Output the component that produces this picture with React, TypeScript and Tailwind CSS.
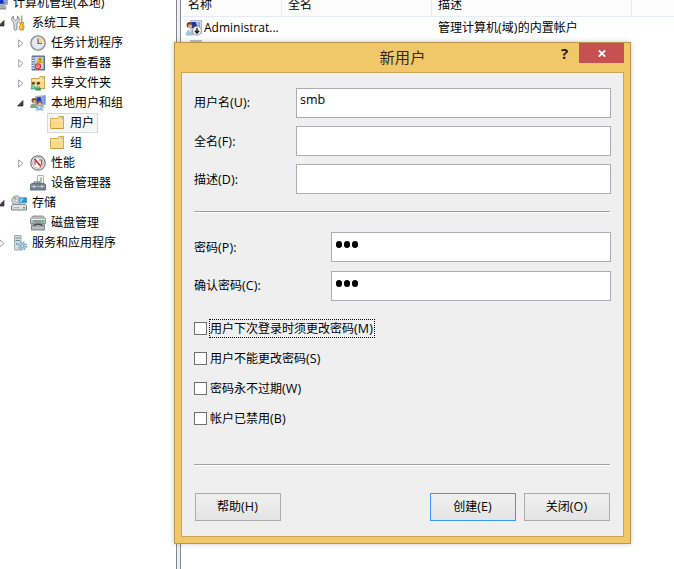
import type { ReactNode } from "react";

const FONT = "font-['Open_Sans','Noto_Sans_CJK_SC',sans-serif]";

// Latin runs are set a little wider than the Chinese text around them.
function Label({ text }: { text: string }) {
  return (
    <span>
      {text.split(/([\x20-\x7e]+)/).map((part, i) =>
        i % 2 === 1 ? (
          <span key={i} className="text-[12.5px] tracking-[0.1px]">
            {part}
          </span>
        ) : (
          part
        ),
      )}
    </span>
  );
}

function Svg({ children }: { children: ReactNode }) {
  return (
    <svg viewBox="0 0 16 16" className="block size-4 shrink-0">
      {children}
    </svg>
  );
}

function MonitorShape() {
  return (
    <>
      <path d="M5.500 1.500l10-1v9l-10 .5z" fill="#c9ced6" stroke="#9aa1aa" strokeWidth=".8" />
      <path d="M6.500 2.500l8-1v7l-8 .5z" fill="#1c33c4" />
      <path d="M10.500 2l4-.5v7l-2.500.2z" fill="#7fa4ee" />
      <path d="M8 10h5l2 2.500H7z" fill="#a6adb5" />
    </>
  );
}

const ComputerIcon = () => (
  <Svg>
    <MonitorShape />
    <path d="M5 12.500h9v2H5z" fill="#8b939d" />
  </Svg>
);

const ToolsIcon = () => (
  <Svg>
    <path d="M2.500 1v3l2 1.500L6.500 4V1l1.700 2v2.500L6 8v6l-1.500 1.500L3 14V8L.8 5.500V3z" fill="#dcdfe2" stroke="#7e848a" strokeWidth=".9" />
    <path d="M9.800.5h1.700v7H9.800z" fill="#a5abb0" />
    <path d="M8.500 7.500H13l-.8 2 1 2.500-.8 3H9l-.8-3 1-2.500z" fill="#f3b413" stroke="#b47b0b" strokeWidth=".6" />
    <path d="M10 10v4" stroke="#ffe38a" />
  </Svg>
);

const ClockIcon = () => (
  <Svg>
    <circle cx="8" cy="8" r="7.300" fill="#c3c6c9" stroke="#83888c" strokeWidth="1.100" />
    <circle cx="8" cy="8" r="5.600" fill="#e0ebf5" stroke="#f4f4f4" strokeWidth=".6" />
    <path d="M8 8V2.400A5.600 5.600 0 0 1 13.600 8z" fill="#f7d79b" />
    <path d="M8 3.500V8.500h4" fill="none" stroke="#596a7c" strokeWidth="1.200" />
  </Svg>
);

const EventIcon = () => (
  <Svg>
    <path d="M2 1h12.500v14H2z" fill="#6e86ba" stroke="#566b9c" />
    <path d="M4.500 2H13.500v12H4.500z" fill="#c4d0e8" />
    <path d="M1 3h3M1 5.500h3M1 8h3M1 10.500h3M1 13h3" stroke="#edf0f5" strokeWidth="1.200" />
    <path d="M10 1.500l3.500 6H6.800z" fill="#ffd51c" stroke="#c59204" strokeWidth=".6" />
    <path d="M10 3.400v2.300M10 6.200v.8" stroke="#333" />
    <circle cx="8" cy="11.300" r="2.500" fill="#f6d0d0" stroke="#d93030" strokeWidth="1.300" />
    <path d="M7 10.300l2 2m0-2l-2 2" stroke="#d93030" strokeWidth=".9" />
  </Svg>
);

function FolderShape() {
  return (
    <>
      <path d="M1.500 3.500h7L10 1.500h4.500v12h-13z" fill="#efc965" stroke="#d3aa50" />
      <path d="M10.500 2.500h3.200v1h-3.800z" fill="#f9fbfd" />
      <path d="M12.300 2.400h1.400v1.100h-1.400z" fill="#5ba0cf" />
      <path d="M2 5h12v8H2z" fill="#f8db88" />
      <path d="M2 5h12" stroke="#fff0bb" />
      <path d="M3 13.500h11.500" stroke="#c9993f" />
    </>
  );
}

const FolderIcon = () => (
  <Svg>
    <FolderShape />
  </Svg>
);

const SharedFolderIcon = () => (
  <Svg>
    <FolderShape />
    <circle cx="3.500" cy="8.500" r="1.700" fill="#5d4728" />
    <circle cx="8.500" cy="8.500" r="1.700" fill="#40352a" />
    <path d="M3.300 8.700h1.500v1.500H3.300zM8.300 8.700h1.500v1.500H8.300z" fill="#e8b78a" />
    <path d="M.8 13.500c0-4 4.500-4 5-.5v1.500h-5z" fill="#52b591" />
    <path d="M5.500 15c0-5 5-5 5.500 0v.5H5.500z" fill="#36966f" />
    <path d="M2.500 12.500l1.500-1M7.500 13l1.500-1" stroke="#c9f1df" />
  </Svg>
);

const UsersIcon = () => (
  <Svg>
    <MonitorShape />
    <circle cx="4" cy="5.500" r="2.500" fill="#78552d" />
    <circle cx="4.600" cy="6.500" r="1.500" fill="#dba97c" />
    <path d="M.3 11.500C.5 7.500 7 7.500 7.300 12v1h-7z" fill="#86a980" />
    <circle cx="9.500" cy="8" r="2.500" fill="#876135" />
    <circle cx="9.800" cy="9" r="1.600" fill="#efc69b" />
    <path d="M5.500 15.500c0-5.500 7.500-5.500 8 0z" fill="#8fbde0" />
    <path d="M8.500 11.500l1 2 1-2z" fill="#fff" />
  </Svg>
);

const PerfIcon = () => (
  <Svg>
    <circle cx="8" cy="8" r="7.200" fill="#f6f6f6" stroke="#777" strokeWidth="1.200" />
    <circle cx="8" cy="8" r="5.300" fill="#fff" stroke="#a5a5a5" strokeWidth=".9" />
    <path d="M5 10V6M9 5h2.500v5" fill="none" stroke="#b44b50" strokeWidth="1.200" />
    <path d="M4.500 4l6.500 7.500" stroke="#eb1a22" strokeWidth="1.700" />
  </Svg>
);

const DeviceIcon = () => (
  <Svg>
    <path d="M7.500.5h6v9h-6z" fill="#f3f5f3" stroke="#b0b4b4" />
    <path d="M10 2.500h2v5h-2z" fill="#9acb8e" />
    <path d="M4 8.500V7h6v1.500" fill="none" stroke="#525d67" />
    <path d="M.5 9.500L2 8.500h12l1.500 1v5.500H.5z" fill="#71818f" stroke="#66737e" />
    <path d="M1 11.500h14" stroke="#aebac4" />
    <path d="M3 10.500h2v2H3zM11 10.500h2v2h-2z" fill="#d4dae0" />
  </Svg>
);

const StorageIcon = () => (
  <Svg>
    <circle cx="5.500" cy="5.500" r="4.700" fill="#cdd2d6" stroke="#92979c" strokeWidth=".9" />
    <path d="M5.500 5.500L2 2.500l2-1.300z" fill="#75bd77" />
    <circle cx="5.500" cy="5.500" r="1.300" fill="#fff" stroke="#92989e" strokeWidth=".7" />
    <path d="M8 2.500h8v5.500H8z" fill="#2691c8" stroke="#73b9d8" strokeWidth=".8" />
    <path d="M9 3.500h4l-3 4H9z" fill="#83d0ee" />
    <path d="M.5 10.500L2 9.300h12l1.500 1.200v4.500H.5z" fill="#dfe2e5" stroke="#7b8187" />
    <path d="M2.500 12.700h6" stroke="#a4aab0" />
    <path d="M12 12h2v1.500h-2z" fill="#23bc3c" />
  </Svg>
);

const DiskIcon = () => (
  <Svg>
    <path d="M3 1h10l2.500 3v4.500H.5V4z" fill="#b4b8bb" stroke="#909497" />
    <path d="M1 4.500h14" stroke="#eceeef" />
    <path d="M3 6h8" stroke="#6f7477" />
    <path d="M11.500 5h2.500v1.700h-2.500z" fill="#2bd940" />
    <path d="M1.500 9.500L4 8h8l2.500 1.500v5.500h-13z" fill="#a2a7aa" stroke="#84898c" />
    <path d="M3.500 11c1.500-2.500 7.500-2.500 9 0" fill="none" stroke="#424649" strokeWidth="1.200" />
    <path d="M2 13h12" stroke="#d2d5d7" />
  </Svg>
);

const ServiceIcon = () => (
  <Svg>
    <path d="M3.500.5h6.500v14.500H3.500z" fill="#d6dfe3" stroke="#9eacb3" />
    <path d="M4.500 3h4.500M4.500 5.500h4.500" stroke="#6c8995" />
    <path d="M5 8h2v1.500H5z" fill="#57b662" />
    <circle cx="11.500" cy="11" r="3.400" fill="#a9c8e2" />
    <circle cx="11.500" cy="11" r="3.900" fill="none" stroke="#6d9ac3" strokeWidth="1.300" strokeDasharray="1.600 1.460" />
    <circle cx="11.500" cy="11" r="1.400" fill="#fff" stroke="#6d9ac3" />
  </Svg>
);

const DisabledUserIcon = () => (
  <Svg>
    <path d="M4.500.5l11-.1v13.100h-11z" fill="#d4d6d9" stroke="#b4b7bb" />
    <path d="M5.500 2h8v6h-8z" fill="#1732ac" />
    <path d="M9.500 2h4v6H12z" fill="#9dbdf2" />
    <circle cx="3.600" cy="5" r="3" fill="#71451f" />
    <circle cx="4" cy="6.300" r="2" fill="#e4b184" />
    <path d="M0 15.500c0-8.500 8-8.500 8 0z" fill="#9cc2e4" />
    <path d="M3 9.500l1 3 1-3z" fill="#fff" />
    <circle cx="11" cy="10.700" r="4.500" fill="#f8f8f8" stroke="#8a8a8a" strokeWidth=".8" />
    <path d="M11 8v5M8.900 10.800l2.100 2.300 2.100-2.300" fill="none" stroke="#222" strokeWidth="1.500" />
  </Svg>
);

function Arrow({ open }: { open: boolean }) {
  return open ? (
    <svg viewBox="0 0 7 7" className="mr-1 block size-[7px] shrink-0">
      <path d="M6 0.500V6H0.500z" fill="#404040" stroke="#262626" strokeWidth=".7" />
    </svg>
  ) : (
    <svg viewBox="0 0 6 9" className="mr-1 block h-[9px] w-[6px] shrink-0">
      <path d="M.7 .8L5 4.500 .7 8.200z" fill="#fff" stroke="#a0a0a0" />
    </svg>
  );
}

type Node = { level: 0 | 1 | 2 | 3; text: string; icon: ReactNode; arrow?: "open" | "closed"; selected?: boolean };

const NODES: Node[] = [
  { level: 0, text: "计算机管理(本地)", icon: <ComputerIcon /> },
  { level: 1, text: "系统工具", icon: <ToolsIcon />, arrow: "open" },
  { level: 2, text: "任务计划程序", icon: <ClockIcon />, arrow: "closed" },
  { level: 2, text: "事件查看器", icon: <EventIcon />, arrow: "closed" },
  { level: 2, text: "共享文件夹", icon: <SharedFolderIcon />, arrow: "closed" },
  { level: 2, text: "本地用户和组", icon: <UsersIcon />, arrow: "open" },
  { level: 3, text: "用户", icon: <FolderIcon />, selected: true },
  { level: 3, text: "组", icon: <FolderIcon /> },
  { level: 2, text: "性能", icon: <PerfIcon />, arrow: "closed" },
  { level: 2, text: "设备管理器", icon: <DeviceIcon /> },
  { level: 1, text: "存储", icon: <StorageIcon />, arrow: "open" },
  { level: 2, text: "磁盘管理", icon: <DiskIcon /> },
  { level: 1, text: "服务和应用程序", icon: <ServiceIcon />, arrow: "closed" },
];

const INDENT = ["-ml-[24px]", "-ml-[5px]", "ml-[14px]", "ml-[33px]"];

function TreeRow({ node }: { node: Node }) {
  return (
    <div className={`flex h-5 items-center ${INDENT[node.level]}`}>
      <div className="flex w-[14px] shrink-0 justify-end">{node.arrow && <Arrow open={node.arrow === "open"} />}</div>
      <div
        className={`flex h-5 items-center gap-[5px] border pr-[3px] pl-px ${
          node.selected ? "border-[#dadada] bg-[#f7f7f7]" : "border-transparent"
        }`}
      >
        {node.icon}
        <Label text={node.text} />
      </div>
    </div>
  );
}

type FieldProps = { label: string; value?: string; narrow?: boolean; password?: boolean; raised?: boolean };

function Field({ label, value, narrow, password, raised }: FieldProps) {
  return (
    <div className="flex h-[30px] items-center justify-between">
      <div className={raised ? "" : "pt-[2px]"}>
        <Label text={label} />
      </div>
      <div className={`flex h-[30px] border border-[#abadb3] bg-white ${narrow ? "w-[280px] pl-1" : "w-[315px] pl-[3px]"}`}>
        {password ? (
          <div className="mt-2 flex gap-[2px]">
            {[0, 1, 2].map((i) => (
              <span key={i} className="h-[7px] w-[6px] rounded-full bg-black" />
            ))}
          </div>
        ) : (
          <span className="pt-px text-[12.5px] leading-5">{value}</span>
        )}
      </div>
    </div>
  );
}

function Check({ label, focused }: { label: string; focused?: boolean }) {
  return (
    <div className="flex h-5 items-center">
      <span className="size-[13px] border border-[#707070] bg-white" />
      <span
        className={`ml-[2px] flex h-[19px] items-center border pt-px ${
          focused ? "w-[166px] border-dotted border-black" : "border-transparent"
        }`}
      >
        <Label text={label} />
      </span>
    </div>
  );
}

function Divider() {
  return (
    <div className="w-[417px] border-b border-white">
      <div className="h-px w-[416px] bg-[#a0a0a0]" />
    </div>
  );
}

function Button({ label, primary }: { label: string; primary?: boolean }) {
  return (
    <div
      className={`flex h-7 w-[86px] items-center justify-center border bg-linear-to-b from-[#f0f0f0] to-[#e4e4e4] pr-px pb-px ${
        primary ? "border-[#3399ff]" : "border-[#acacac]"
      }`}
    >
      <Label text={label} />
    </div>
  );
}

function Dialog() {
  return (
    <div className="absolute top-[42px] left-[174px] flex h-[502px] w-[457px] flex-col border border-[#b8974c] bg-[#f0c869] px-[6px] pb-[6px] shadow-[0_0_5px_rgba(0,0,0,0.22)]">
      <div className="flex h-[29px] shrink-0 items-start">
        <div className="w-[89px]" />
        <div className="flex-1 pt-[2px] text-center text-[15.3px] leading-6 text-[#33291a]">新用户</div>
        <div className="flex h-5 w-[44px] items-center justify-center pb-px pl-[15px] text-[15px] font-bold text-[#1e1e1e]">?</div>
        <div className="flex h-5 w-[45px] items-center justify-center bg-[#c75050] pt-px">
          <svg viewBox="0 0 8 7" className="h-[7px] w-2">
            <path d="M.8.3l6.400 6.400M7.200.3L.8 6.700" stroke="#fff" strokeWidth="1.700" />
          </svg>
        </div>
      </div>
      <div className="flex h-[465px] shrink-0 flex-col border border-[#c9a555] bg-[#efefef] pt-[15px] pr-[12px] pl-[12px]">
        <div className="flex flex-col gap-2">
          <Field label="用户名(U):" value="smb" raised />
          <Field label="全名(F):" />
          <Field label="描述(D):" />
        </div>
        <div className="mt-[17px]">
          <Divider />
        </div>
        <div className="mt-[19px] flex flex-col gap-[9px]">
          <Field label="密码(P):" narrow password />
          <Field label="确认密码(C):" narrow password raised />
        </div>
        <div className="mt-[17px] flex flex-col gap-[10px]">
          <Check label="用户下次登录时须更改密码(M)" focused />
          <Check label="用户不能更改密码(S)" />
          <Check label="密码永不过期(W)" />
          <Check label="帐户已禁用(B)" />
        </div>
        <div className="mt-[36px]">
          <Divider />
        </div>
        <div className="mt-[27px] flex gap-2 pr-px pl-px">
          <Button label="帮助(H)" />
          <div className="flex-1" />
          <Button label="创建(E)" primary />
          <Button label="关闭(O)" />
        </div>
      </div>
    </div>
  );
}

export default function App() {
  return (
    <div className={`relative flex h-[569px] w-[674px] overflow-hidden bg-white text-[12px] leading-4 whitespace-nowrap text-black ${FONT}`}>
      <div className="w-[176px] shrink-0 overflow-hidden">
        <div className="-mt-[7px]">
          {NODES.map((n) => (
            <TreeRow key={n.text} node={n} />
          ))}
        </div>
      </div>
      <div className="w-[5px] shrink-0 border-x border-[#828790] bg-[#f0f0f0]" />
      <div className="ml-px flex-1">
        <div className="flex h-[17px] items-end border-b border-[#e3ecf8] bg-[#fcfcfc]">
          <div className="h-4 w-[100px] border-r border-[#e3ecf8] pl-[6px]">
            <div className="-mt-[3px]">名称</div>
          </div>
          <div className="h-4 w-[150px] border-r border-[#e3ecf8] pl-[6px]">
            <div className="-mt-[3px]">全名</div>
          </div>
          <div className="h-4 w-[200px] border-r border-[#e3ecf8] pl-[6px]">
            <div className="-mt-[3px]">描述</div>
          </div>
        </div>
        <div className="mt-[2px] flex h-[18px] items-center pl-1">
          <DisabledUserIcon />
          <span className="ml-[2px] w-[234px] text-[12px]">Administrat...</span>
          <Label text="管理计算机(域)的内置帐户" />
        </div>
        <div className="mt-[3px] flex pl-[8px]">
          <div className="h-3 w-3 bg-[#bfc1c4]" />
        </div>
      </div>
      <Dialog />
    </div>
  );
}
